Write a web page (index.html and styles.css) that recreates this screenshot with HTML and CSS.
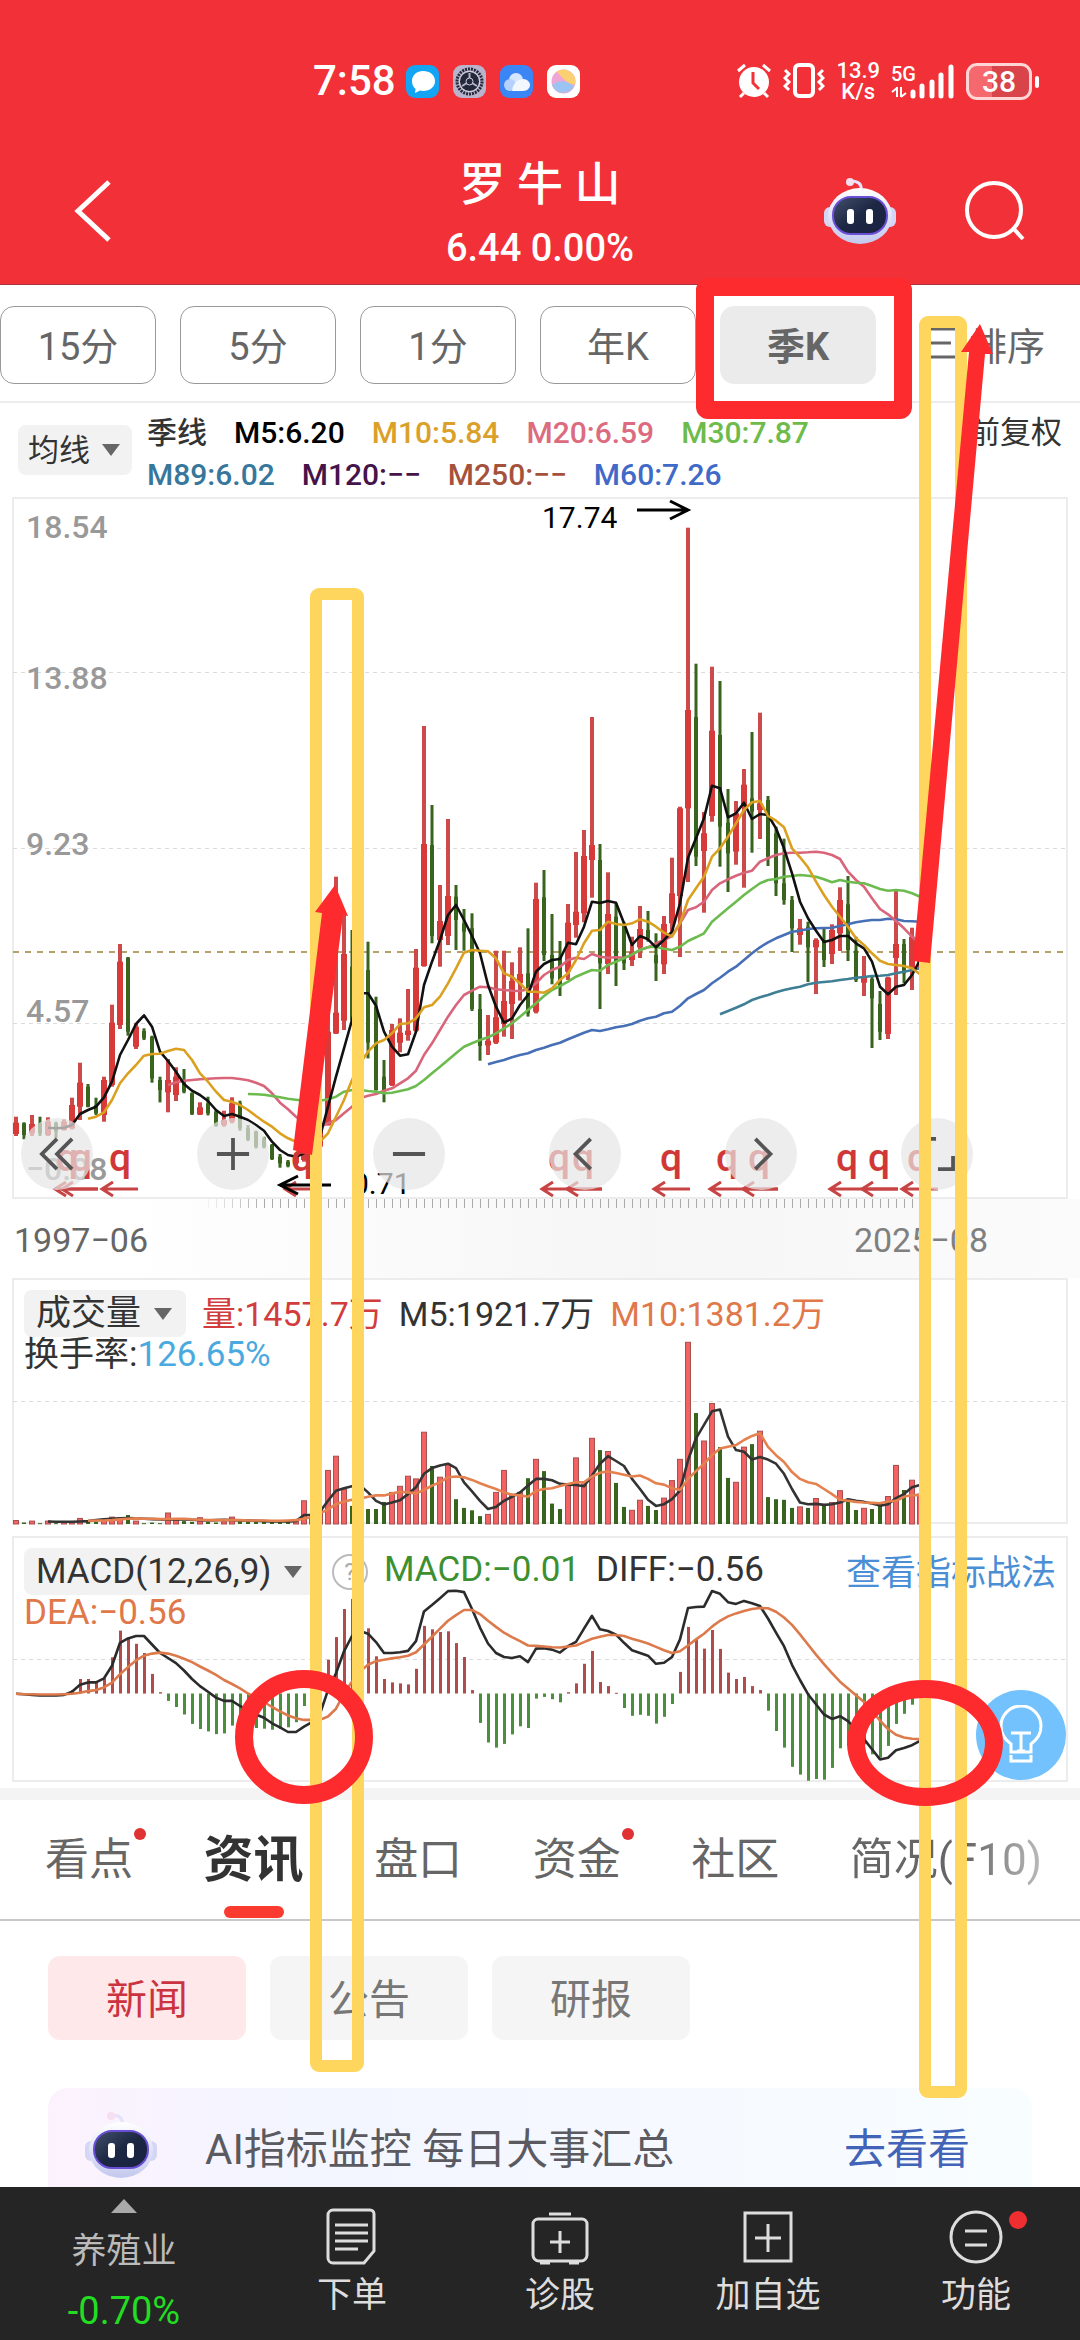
FILE: index.html
```
<!DOCTYPE html>
<html lang="zh-CN">
<head>
  <meta charset="UTF-8">
  <title>罗牛山 - 季K</title>
  <meta name="viewport" content="width=device-width, initial-scale=1.0">
  <link rel="stylesheet" href="styles.css">
</head>
<body>
  <!-- shared robot head -->
  <svg class="sprite" aria-hidden="true">
    <defs>
      <linearGradient id="shell" x1="0" y1="0" x2="0" y2="1">
        <stop offset="0" stop-color="#ffffff"/>
        <stop offset="1" stop-color="#c3c8ee"/>
      </linearGradient>
      <linearGradient id="visor" x1="0" y1="0" x2="1" y2="1">
        <stop offset="0" stop-color="#45506c"/>
        <stop offset="0.5" stop-color="#1c2744"/>
        <stop offset="1" stop-color="#1a2240"/>
      </linearGradient>
      <symbol id="robot" viewBox="0 0 72 68">
        <path d="M37 13C38 7 34 4 27 4" fill="none" stroke="#e6e2fb" stroke-width="3"/>
        <circle cx="26" cy="5" r="4" fill="#f6dff0"/>
        <rect x="0" y="30" width="12" height="20" rx="6" fill="#d5d5f5"/>
        <rect x="60" y="30" width="12" height="20" rx="6" fill="#d5d5f5"/>
        <ellipse cx="36" cy="39" rx="32" ry="28" fill="url(#shell)"/>
        <rect x="9" y="20" width="54" height="37" rx="18" fill="url(#visor)" stroke="#6a4fd6" stroke-width="2"/>
        <rect x="23" y="32" width="7" height="15" rx="3" fill="#fff"/>
        <rect x="42" y="32" width="7" height="15" rx="3" fill="#fff"/>
      </symbol>
    </defs>
  </svg>

  <div class="app">
    <header class="header">
      <div class="status">
        <div class="status-left">
          <span class="clock">7:58</span>
          <svg class="app-icon" viewBox="0 0 33 33">
            <rect width="33" height="33" rx="9" fill="#13a5f3"/>
            <path d="M17 6c7 0 12 4 12 10s-5 10-12 10c-1 0-2 0-3-.4L9 28l.6-4C7 22 6 19 6 16 6 10 11 6 17 6z" fill="#fff"/>
          </svg>
          <svg class="app-icon" viewBox="0 0 33 33">
            <rect width="33" height="33" rx="9" fill="#b9b3cc"/>
            <circle cx="16.500" cy="16.500" r="12.500" fill="none" stroke="#23293a" stroke-width="3" stroke-dasharray="2 1"/>
            <circle cx="16.500" cy="16.500" r="10" fill="#23293a" stroke="#e6e6ee"/>
            <path d="M16.500 16.500V8M16.500 16.500L9 21M16.500 16.500L24 21" stroke="#b9b3cc" stroke-width="2"/>
            <circle cx="16.500" cy="16.500" r="3.500" fill="#23293a" stroke="#cfcfe0"/>
          </svg>
          <svg class="app-icon" viewBox="0 0 33 33">
            <rect width="33" height="33" rx="9" fill="#3b86f6"/>
            <circle cx="16" cy="15" r="7" fill="#d5e6ff"/>
            <circle cx="10" cy="20" r="6" fill="#b5d2ff"/>
            <path d="M12 26c1-8 6-12 11-12 4 0 7 3 7 6s-3 6-7 6z" fill="#f3f8ff"/>
          </svg>
          <svg class="app-icon" viewBox="0 0 33 33">
            <rect width="33" height="33" rx="9" fill="#fff"/>
            <circle cx="16.500" cy="16.500" r="12" fill="#f0a6d4"/>
            <path d="M10 6.500a12 12 0 0 1 18 13C22 20 16 14 10 6.500z" fill="#fbd070"/>
            <path d="M5 20c8-6 14-4 22 1a12 12 0 0 1-22-1z" fill="#9cc4f2"/>
          </svg>
        </div>
        <div class="status-right">
          <svg class="alarm" viewBox="0 0 36 36">
            <circle cx="18" cy="19" r="15" fill="#fff"/>
            <path d="M2 8l7-6M34 8l-7-6M8 30l-4 4M28 30l4 4" stroke="#fff" stroke-width="3" fill="none"/>
            <path d="M17 9v11l6 6" stroke="#f23037" stroke-width="3" fill="none"/>
          </svg>
          <svg class="vibrate" viewBox="0 0 42 36">
            <rect x="12" y="2" width="18" height="31" rx="4" fill="none" stroke="#fff" stroke-width="4"/>
            <path d="M2 7l4 4-4 4 4 4-4 4 4 4M40 7l-4 4 4 4-4 4 4 4-4 4" fill="none" stroke="#fff" stroke-width="3"/>
          </svg>
          <span class="speed">13.9<br>K/s</span>
          <svg class="signal" viewBox="0 0 64 36">
            <path d="M22 33v-4M31 33V23M41 33V19M50 33V12M60 33V4" stroke="#fff" stroke-width="5" stroke-linecap="round"/>
            <path d="M6 24v10M6 25l-5 4M10 24v10M10 34l5-4" stroke="#fff" stroke-width="2"/>
            <text x="0" y="18" class="net">5G</text>
          </svg>
          <span class="battery">38</span>
        </div>
      </div>
      <div class="title-row">
        <button class="icon-btn back" aria-label="返回">
          <svg width="40" height="64" viewBox="0 0 40 64"><path d="M37 3L6 32l31 29" fill="none" stroke="#fff" stroke-width="5"/></svg>
        </button>
        <div class="title">
          <h1>罗 牛 山</h1>
          <p>6.44 0.00%</p>
        </div>
        <div class="title-actions">
          <button class="icon-btn" aria-label="助手"><svg width="72" height="68"><use href="#robot"/></svg></button>
          <button class="icon-btn" aria-label="搜索">
            <svg width="62" height="62" viewBox="0 0 62 62"><circle cx="30" cy="30" r="27" fill="none" stroke="#fff" stroke-width="4"/><path d="M49 48l10 11" stroke="#fff" stroke-width="4"/></svg>
          </button>
        </div>
      </div>
    </header>

    <main class="content">
      <nav class="periods">
        <button>15分</button>
        <button>5分</button>
        <button>1分</button>
        <button>年K</button>
        <button class="active">季K</button>
        <button class="sort">
          <svg width="24" height="32" viewBox="0 0 24 32"><path d="M0 2h24M0 16h20M0 30h24" stroke="#666" stroke-width="3"/></svg>
          排序
        </button>
      </nav>

      <section class="legend">
        <label class="picker picker-ma"><select aria-label="均线"><option>均线</option></select></label>
        <div class="ma-lines">
          <div class="ma-row">
            <span class="c-dark">季线</span>
            <span class="c-black">M5:6.20</span>
            <span class="c-gold">M10:5.84</span>
            <span class="c-pink">M20:6.59</span>
            <span class="c-lime">M30:7.87</span>
          </div>
          <div class="ma-row">
            <span class="c-teal">M89:6.02</span>
            <span class="c-purple">M120:−−</span>
            <span class="c-brown">M250:−−</span>
            <span class="c-blue">M60:7.26</span>
          </div>
        </div>
        <button class="adjust">前复权</button>
      </section>

      <section class="chart chart-price">
        <svg id="price" viewBox="0 498 1080 701"></svg>
        <div class="chart-tools">
          <button aria-label="后退"><svg viewBox="0 0 36 36"><path d="M18 2L2 18l16 16M34 2L18 18l16 16"/></svg></button>
          <button aria-label="放大"><svg viewBox="0 0 36 36"><path d="M18 1v34M1 18h34"/></svg></button>
          <button aria-label="缩小"><svg viewBox="0 0 36 36"><path d="M1 18h34"/></svg></button>
          <button aria-label="左移"><svg viewBox="0 0 36 36"><path d="M24 2L8 18l16 16"/></svg></button>
          <button aria-label="右移"><svg viewBox="0 0 36 36"><path d="M12 2l16 16-16 16"/></svg></button>
          <button aria-label="全屏"><svg viewBox="0 0 36 36"><path d="M1 16V2h16M35 20v14H19"/></svg></button>
        </div>
      </section>

      <div class="dates">
        <span>1997−06</span>
        <span class="date-end">2025−08</span>
      </div>

      <section class="chart chart-volume">
        <svg id="volume" viewBox="0 1277 1080 247"></svg>
        <div class="chart-info">
          <div class="info-row">
            <label class="picker"><select aria-label="副图一"><option>成交量</option></select></label>
            <span class="c-red">量:1457.7万</span>
            <span class="c-dark">M5:1921.7万</span>
            <span class="c-orange">M10:1381.2万</span>
          </div>
          <div class="info-sub"><span class="c-dark">换手率:</span><span class="c-sky">126.65%</span></div>
        </div>
      </section>

      <section class="chart chart-macd">
        <svg id="macd" viewBox="0 1535 1080 246"></svg>
        <div class="chart-info">
          <div class="info-row">
            <label class="picker"><select aria-label="副图二"><option>MACD(12,26,9)</option></select></label>
            <button class="help" aria-label="说明">?</button>
            <span class="c-green">MACD:−0.01</span>
            <span class="c-dark">DIFF:−0.56</span>
            <a class="tips" href="#">查看指标战法</a>
          </div>
          <div class="info-sub"><span class="c-orange">DEA:−0.56</span></div>
        </div>
        <button class="bulb" aria-label="提示">
          <svg width="44" height="60" viewBox="0 0 44 60"><path d="M12 47v-8C5 34 2 28 2 21a20 20 0 0 1 40 0c0 7-3 13-10 18v8zM12 50v6h20v-6M12 28h20M22 28v18M18 46h8" fill="none" stroke="#fff" stroke-width="3"/></svg>
        </button>
      </section>

      <nav class="tabs">
        <a href="#" class="dot">看点</a>
        <a href="#" class="active">资讯</a>
        <a href="#">盘口</a>
        <a href="#" class="dot">资金</a>
        <a href="#">社区</a>
        <a href="#" class="fade">简况(F10)</a>
      </nav>

      <div class="chips">
        <button class="active">新闻</button>
        <button>公告</button>
        <button>研报</button>
      </div>

      <div class="banner">
        <svg width="72" height="68"><use href="#robot"/></svg>
        <span>AI指标监控 每日大事汇总</span>
        <a href="#">去看看</a>
      </div>
    </main>

    <nav class="bottom-nav">
      <a href="#" class="sector">
        <svg width="26" height="14" viewBox="0 0 26 14"><path d="M13 0l13 14H0z" fill="#aaa"/></svg>
        <span>养殖业</span>
        <b>-0.70%</b>
      </a>
      <a href="#">
        <svg viewBox="0 0 60 60"><path d="M11 3h37a4 4 0 0 1 4 4v37l-10 12H11a5 5 0 0 1-5-5V8a5 5 0 0 1 5-5zM13 18h33M13 26h33M13 34h33M13 42h23"/></svg>
        <span>下单</span>
      </a>
      <a href="#">
        <svg viewBox="0 0 60 60"><path d="M8 12h44a5 5 0 0 1 5 5v31a6 6 0 0 1-6 6H9a6 6 0 0 1-6-6V17a5 5 0 0 1 5-5zM19 7h22M30 24v22M20 35h20M10 56h10M39 56h10"/></svg>
        <span>诊股</span>
      </a>
      <a href="#">
        <svg viewBox="0 0 60 60"><path d="M7 6h46v48H7zM30 17v28M17 31h26"/></svg>
        <span>加自选</span>
      </a>
      <a href="#" class="more">
        <svg viewBox="0 0 60 60"><path d="M30 5a25 25 0 1 1 0 50a25 25 0 1 1 0-50zM19 24h22M19 38h22"/></svg>
        <span>功能</span>
      </a>
    </nav>

    <!-- hand-drawn marks on top of everything -->
    <svg class="marks" viewBox="0 0 1080 2340" aria-hidden="true">
      <rect x="316" y="594" width="42" height="1472" rx="3" class="mark-yellow"/>
      <rect x="925" y="322" width="36" height="1770" rx="3" class="mark-yellow"/>
      <rect x="705" y="287" width="198" height="123" rx="3" class="mark-red"/>
      <ellipse cx="304" cy="1737" rx="60" ry="58" class="mark-red"/>
      <ellipse cx="925" cy="1743" rx="69" ry="54" class="mark-red"/>
      <path d="M335 885l13 31-5-1-31 240-19-5 29-237-7-1z" class="mark-fill"/>
      <path d="M980 324l13 30-8 0-55 609-17-2 56-609-8 0z" class="mark-fill"/>
    </svg>
  </div>

  <script src="script.js"></script>
</body>
</html>
```

FILE: styles.css
```
:root {
  --red: #f23037;
  --line: #ececec;
  --text: #333;
  --muted: #666;
}

* {
  box-sizing: border-box;
}

body {
  margin: 0;
  background: #fff;
  color: var(--text);
  font-family: Roboto, "Noto Sans CJK SC", sans-serif;
}

h1, p {
  margin: 0;
  font-weight: 400;
}

button, select {
  margin: 0;
  padding: 0;
  border: none;
  background: none;
  color: inherit;
  font: inherit;
  cursor: pointer;
}

a {
  color: inherit;
  text-decoration: none;
}

span, a, button {
  white-space: nowrap;
}

svg {
  display: block;
}

.sprite {
  position: absolute;
  width: 0;
  height: 0;
}

.app {
  position: relative;
  display: flex;
  flex-direction: column;
  height: 100vh;
  overflow: hidden;
}

/* header */
.header {
  flex: none;
  background: var(--red);
  color: #fff;
  border-bottom: 1px solid #a8383c;
}

.status {
  display: flex;
  justify-content: space-between;
  align-items: center;
  height: 162px;
  padding: 0 48px 0 313px;
}

.status-left,
.status-right {
  display: flex;
  align-items: center;
}

.status-left {
  gap: 14px;
}

.status-right {
  gap: 11px;
}

.clock {
  font-size: 42px;
  font-weight: 500;
  line-height: 48px;
  margin-right: -4px;
}

.app-icon {
  width: 33px;
  height: 33px;
}

.alarm {
  width: 36px;
  height: 36px;
}

.vibrate {
  width: 42px;
  height: 36px;
}

.speed {
  font-size: 22px;
  font-weight: 500;
  line-height: 21px;
  text-align: center;
}

.signal {
  width: 64px;
  height: 36px;
}

.net {
  font-size: 20px;
  font-weight: 500;
  fill: #fff;
}

.battery {
  position: relative;
  width: 66px;
  border: 3px solid #ffd5d6;
  border-radius: 11px;
  background: linear-gradient(90deg, #f5696e 38%, #d9444a 38%);
  font-size: 30px;
  font-weight: 500;
  line-height: 31px;
  text-align: center;
}

.battery::after {
  content: "";
  position: absolute;
  right: -10px;
  top: 10px;
  width: 4px;
  height: 12px;
  border-radius: 2px;
  background: #fff;
}

.title-row {
  display: grid;
  grid-template-columns: 1fr auto 1fr;
  grid-template-rows: 108px;
  align-items: center;
  height: 122px;
  padding: 0 54px 14px 72px;
}

.title {
  margin-left: -18px;
  text-align: center;
}

.title h1 {
  font-size: 46px;
  font-weight: 500;
  line-height: 64px;
}

.title p {
  font-size: 38px;
  font-weight: 500;
  line-height: 64px;
}

.title-actions {
  display: flex;
  justify-content: flex-end;
  align-items: center;
  gap: 68px;
}

.icon-btn {
  justify-self: start;
  margin-bottom: 10px;
}

/* period buttons */
.content {
  flex: 1;
  min-height: 0;
  overflow: hidden;
}

.periods {
  display: flex;
  gap: 24px;
  height: 118px;
  padding-top: 21px;
  border-bottom: 2px solid var(--line);
}

.periods button {
  width: 156px;
  height: 78px;
  padding-bottom: 4px;
  border: 1px solid #999;
  border-radius: 14px;
  color: var(--muted);
  font-size: 38px;
}

.periods .active {
  border-color: #ebebeb;
  background: #ebebeb;
  font-weight: 700;
}

.periods .sort {
  display: flex;
  align-items: center;
  justify-content: center;
  gap: 14px;
  width: 176px;
  border: none;
}

/* moving average legend */
.legend {
  display: flex;
  align-items: flex-start;
  height: 95px;
  padding: 9px 18px 0;
  font-size: 31px;
}

.picker {
  position: relative;
  border-radius: 8px;
  background: #f2f2f2;
}

.picker::after {
  content: "";
  position: absolute;
  right: 14px;
  top: 50%;
  margin-top: -6px;
  border: 9px solid transparent;
  border-top: 12px solid var(--muted);
  border-bottom: none;
  pointer-events: none;
}

.picker select {
  display: block;
  appearance: none;
  height: 47px;
  padding: 0 44px 0 12px;
}

.picker-ma {
  margin-top: 13px;
}

.picker-ma select {
  height: 50px;
  padding: 0 42px 0 10px;
}

.picker-ma::after {
  right: 12px;
}

.ma-lines {
  flex: 1;
  margin-left: 15px;
  font-size: 30px;
  font-weight: 500;
}

.ma-row {
  display: flex;
  gap: 27px;
  line-height: 42px;
}

.adjust {
  line-height: 42px;
}

.c-dark { color: #333; }
.c-black { color: #000; }
.c-gold { color: #dba02a; }
.c-pink { color: #dc6b80; }
.c-lime { color: #6dbb4a; }
.c-teal { color: #37779c; }
.c-purple { color: #45144a; }
.c-brown { color: #a5523c; }
.c-blue { color: #4169c8; }
.c-red { color: #d23c3c; }
.c-orange { color: #e0784a; }
.c-sky { color: #4aa9de; }
.c-green { color: #3d9030; }

/* charts */
.chart {
  position: relative;
}

.chart > svg {
  width: 100%;
  overflow: visible;
}

.chart-price {
  z-index: 1;
}

.frame { fill: none; stroke: var(--line); stroke-width: 2; }
.grid { stroke: #dcdcdc; stroke-width: 1; stroke-dasharray: 4 4; }
.now { stroke: #b5a06a; stroke-width: 2; stroke-dasharray: 6 6; }
.up { fill: #d83a3a; }
.down { fill: #38641e; }
.up-wick { fill: #cc4a4a; }
.vol-up { fill: #f26262; stroke: #a85050; }
.hist-up { fill: #b04c4c; }
.hist-down { fill: #4b8f3c; }
.line { fill: none; stroke-width: 2.6; stroke-linejoin: round; }
.tick { stroke: #aaa; stroke-width: 1; }
.axis { fill: #999; font-size: 32px; font-weight: 500; }
.peak { fill: #000; font-size: 30px; }
.peak-arrow { fill: none; stroke: #000; stroke-width: 3; }
.event { fill: #d03838; font-size: 39px; font-weight: 500; text-anchor: middle; }
.event-arrow { fill: none; stroke: #c84444; stroke-width: 3; }

.chart-tools {
  position: absolute;
  left: 0;
  right: 0;
  bottom: 9px;
  display: flex;
  justify-content: space-between;
  padding: 0 107px 0 21px;
}

.chart-tools button {
  display: flex;
  align-items: center;
  justify-content: center;
  width: 72px;
  height: 72px;
  border-radius: 50%;
  background: rgba(229, 229, 229, 0.7);
}

.chart-tools svg {
  width: 34px;
  height: 34px;
  overflow: visible;
  fill: none;
  stroke: #555;
  stroke-width: 4;
}

.dates {
  display: flex;
  justify-content: space-between;
  height: 79px;
  padding: 0 92px 0 14px;
  background: linear-gradient(90deg, #fff 10%, #f6f6f6 60%, #fbfbfb);
  color: var(--muted);
  font-size: 34px;
  line-height: 82px;
}

.date-end {
  color: #808080;
}

.chart-info {
  position: absolute;
  left: 24px;
  right: 24px;
  top: 12px;
  font-size: 35px;
}

.info-row {
  display: flex;
  align-items: center;
  gap: 16px;
  height: 47px;
}

.info-row > span,
.info-row > a {
  padding-bottom: 4px;
}

.chart-volume .info-row > span {
  font-size: 34px;
}

.info-sub {
  line-height: 36px;
}

.chart-macd {
  margin-top: 11px;
}

.help {
  width: 36px;
  height: 36px;
  border: 2px solid #bbb;
  border-radius: 50%;
  color: #aaa;
  font-size: 24px;
  line-height: 30px;
}

.tips {
  margin-left: auto;
  color: #4a8fd6;
}

.bulb {
  position: absolute;
  right: 14px;
  bottom: 2px;
  display: flex;
  align-items: center;
  justify-content: center;
  width: 90px;
  height: 90px;
  border-radius: 50%;
  background: #74c2fd;
}

/* info tabs */
.tabs {
  display: flex;
  justify-content: space-between;
  align-items: center;
  height: 133px;
  margin-top: 6px;
  padding: 0 38px 0 45px;
  border-top: 12px solid #f4f4f4;
  border-bottom: 2px solid #c8c8c8;
  color: var(--muted);
  font-size: 44px;
  line-height: 64px;
}

.tabs a {
  position: relative;
}

.tabs .active {
  color: var(--text);
  font-size: 50px;
  font-weight: 700;
}

.tabs .active::after {
  content: "";
  position: absolute;
  left: 50%;
  bottom: -26px;
  width: 60px;
  height: 12px;
  margin-left: -30px;
  border-radius: 6px;
  background: #fb3a30;
}

.tabs .dot::after {
  content: "";
  position: absolute;
  right: -13px;
  top: 0;
  width: 12px;
  height: 12px;
  border-radius: 50%;
  background: #e03232;
}

.tabs .fade {
  background: linear-gradient(90deg, #666 60%, #bbb);
  background-clip: text;
  color: transparent;
}

.chips {
  display: flex;
  gap: 24px;
  padding: 35px 48px 0;
}

.chips button {
  width: 198px;
  height: 84px;
  padding-bottom: 4px;
  border-radius: 12px;
  background: #f5f5f5;
  color: #777;
  font-size: 41px;
}

.chips .active {
  background: #ffe8ea;
  color: #cc3340;
}

.banner {
  display: flex;
  align-items: center;
  height: 140px;
  margin: 48px 48px 0;
  padding: 0 62px 26px 37px;
  border-radius: 20px;
  background: linear-gradient(90deg, #fcf2fd, #f3f5ff 25%, #f8fdff);
  color: #5a5a60;
  font-size: 42px;
}

.banner span {
  margin-left: 48px;
}

.banner a {
  margin-left: auto;
  color: #4163b8;
}

/* bottom bar */
.bottom-nav {
  flex: none;
  display: grid;
  grid-template-columns: 31fr 26fr 26fr 26fr 26fr;
  height: 153px;
  background: #252525;
  color: #ddd;
  font-size: 35px;
}

.bottom-nav a {
  display: flex;
  flex-direction: column;
  align-items: center;
  padding-top: 20px;
}

.bottom-nav a:not(.sector) svg {
  width: 60px;
  height: 60px;
  fill: none;
  stroke: #ddd;
  stroke-width: 3;
}

.bottom-nav span {
  line-height: 58px;
}

.bottom-nav .sector {
  padding-top: 12px;
}

.sector span {
  margin-top: 10px;
  color: #bbb;
}

.sector b {
  color: #22dd22;
  font-size: 38px;
  font-weight: 400;
  line-height: 60px;
}

.more {
  position: relative;
}

.more::after {
  content: "";
  position: absolute;
  right: 53px;
  top: 24px;
  width: 18px;
  height: 18px;
  border-radius: 50%;
  background: #ee2e30;
}

/* marks */
.marks {
  position: absolute;
  left: 0;
  top: 0;
  z-index: 5;
  width: 100%;
  pointer-events: none;
}

.mark-yellow { fill: none; stroke: #fed65d; stroke-width: 12; }
.mark-red { fill: none; stroke: #fd2b2d; stroke-width: 18; }
.mark-fill { fill: #fd2b2d; }
```

FILE: script.js
```
// Values are offsets from the pane origin, in sub-pixel units.
// One candle per quarter, 8px apart.
const STEP = 8;
const LEFT = 16;
const PRICE = { origin: 860, unit: 3 };
const LOWER = { origin: 1270, unit: 2.9585 };
const xOf = i => LEFT + i * STEP;
const yOf = (pane, v) => pane.origin + v / pane.unit;

// r = up, g = down; high, body top, body bottom, low
const candles = `
r 770 788 822 828|g 787 790 825 838|r 765 792 820 828|g 770 790 820 828|r 772 785 825 828|g 785 790 815 835
r 778 785 810 812|r 713 735 805 808|r 608 668 740 780|g 672 680 740 742|g 713 735 760 765|r 650 660 765 785
r 434 488 675 680|r 252 305 495 507|g 291 293 515 527|r 490 500 560 567|g 505 513 535 540|g 527 530 655 668
g 650 660 690 727|r 597 660 697 757|r 622 650 705 723|g 627 660 695 700|g 697 700 762 765|r 727 742 764 765
g 710 730 760 766|g 750 755 797 800|r 752 780 795 800|r 712 730 785 790|g 722 730 805 812|g 795 805 838 843
g 812 815 860 865|g 830 835 860 865|g 852 855 897 900|g 882 890 910 923|g 900 905 917 922|r 880 890 910 917
r 860 870 900 905|r 840 850 895 900|r 780 790 860 870|r 460 515 795 797|r 50 458 520 522|r 165 282 482 510
g 210 320 480 485|g 260 330 480 500|g 245 330 548 595|g 410 440 690 692|g 600 650 690 727|r 492 510 675 678
r 475 518 548 577|r 387 512 525 542|r 267 323 512 515|r -402 -48 318 320|g -165 -45 228 250|r 75 183 240 320
r -123 108 228 255|g 75 110 180 270|g 147 190 215 272|g 160 205 447 453|g 402 447 558 602|r 465 542 556 585
r 272 472 548 552|r 272 423 492 530|r 307 363 432 537|r 262 342 370 422|g 205 340 460 470|r 68 117 455 460
g 30 112 285 303|g 162 285 355 373|g 243 290 380 408|r 132 188 335 360|r -24 155 195 233|r -90 -12 160 187
r -429 -45 0 113|g -48 0 310 447|r 37 162 312 342|g 130 170 305 378|g 185 195 310 330|r 230 275 300 318
r 138 207 262 294|g 153 210 235 245|g 220 285 310 363|r 168 192 313 342|r -7 100 190 215|r -160 -155 108 291
r -997 -450 -155 66|g -589 -429 -10 18|r -144 -80 -27 158|r -580 -388 -132 -115|g -537 -375 -100 20|g -213 -112 -20 96
r -177 -140 -25 14|r -273 -226 -160 83|g -384 -185 -145 -22|r -442 -170 -150 -63|g -192 -180 -10 18|g -100 -80 70 108
g -64 70 120 134|g 108 120 205 276|r 177 205 225 254|g 185 200 262 366|r 235 240 262 402|g 205 240 300 321
r 193 210 282 312|r 82 120 220 273|g 48 133 270 303|g 230 272 360 366|r 288 350 368 408|g 350 357 415 564
g 393 432 515 540|r 350 353 522 537|r 93 252 294 405|g 237 252 340 370|r 203 230 325 390|r 250 290 320 330
`.trim().split(/[|\n]/).map(row => {
  const [kind, ...v] = row.split(' ');
  return { up: kind === 'r', v: v.map(Number) };
});

const averages = [
  { color: '#466fb5', from: 59, v: [613,606,600,592,585,580,570,563,555,548,538,528,518,510,513,508,502,498,492,482,475,470,460,455,437,415,402,390,370,353,335,320,300,280,262,247,235,225,215,212,207,205,204,203,198,193,187,183,180,180,176,178,183,184,185] },
  { color: '#3f7f96', from: 88, v: [463,453,443,433,420,412,405,397,390,385,380,373,368,366,364,360,357,353,351,348,347,345,340,335,330,325] },
  { color: '#d9657b', from: 19, v: [675,667,662,660,658,656,655,654,654,657,661,668,678,700,728,748,770,790,800,800,790,780,760,740,715,707,702,692,685,670,655,632,585,550,510,470,435,405,392,380,382,388,390,392,393,388,370,345,330,320,300,293,297,282,290,293,292,293,285,270,262,250,240,228,190,150,142,125,90,70,58,47,38,32,5,-5,-15,-20,-22,-22,-23,-25,-22,-15,-3,35,60,80,115,147,163,183,205,230,250] },
  { color: '#6cbb4f', from: 29, v: [702,703,704,708,712,716,719,722,724,722,718,710,695,690,690,693,695,700,698,693,688,678,660,640,620,600,580,560,550,540,532,520,505,490,470,450,430,408,390,378,365,350,340,330,332,315,305,295,283,270,262,260,266,270,260,243,232,220,185,165,145,125,105,87,70,60,57,50,48,45,47,50,58,67,60,65,68,70,78,87,92,90,92,100,110] },
  { color: '#111', from: 4, v: [803,805,803,795,762,750,740,712,665,585,540,492,466,500,575,603,635,672,692,705,723,750,768,762,770,780,795,812,845,870,885,890,880,860,830,740,650,565,480,400,400,437,515,560,587,583,515,375,305,240,165,135,180,228,280,375,440,488,475,435,405,335,312,300,297,248,253,200,125,129,123,128,190,255,228,238,262,240,215,130,-7,-65,-125,-223,-215,-128,-140,-172,-123,-138,-135,-95,-35,40,125,175,212,246,240,228,228,250,265,305,380,403,380,375,345,300] },
  { color: '#dba020', from: 9, v: [776,770,757,720,670,640,615,587,582,581,573,566,570,600,640,665,695,720,725,735,750,768,785,800,820,835,845,850,852,845,820,770,720,660,610,575,550,540,520,492,490,475,442,435,410,370,325,278,270,272,274,295,340,350,370,395,395,398,385,360,340,300,250,212,210,185,192,195,190,178,185,200,218,230,190,120,85,50,-10,-35,-70,-110,-150,-173,-177,-132,-118,-98,-35,-8,22,65,105,140,170,200,235,255,280,302,312,315,318,325,343] }
];

const volumes = [738,744,740,746,740,746,744,742,732,740,742,735,728,732,722,740,746,744,746,716,735,740,742,730,742,744,742,728,738,740,742,742,742,743,740,735,680,720,700,590,548,645,695,700,704,704,683,655,637,607,615,477,577,610,572,675,701,708,725,720,655,590,660,655,613,557,592,688,704,635,553,630,495,530,534,627,698,708,678,695,707,672,620,557,211,420,503,392,521,612,625,521,512,474,669,675,677,701,698,701,673,690,685,650,680,707,702,704,690,667,575,648,619,660];
const volumeAverages = [
  { color: '#333', from: 4, v: [741,742,742,742,741,740,737,735,733,732,731,732,733,734,735,736,735,735,736,737,738,737,736,737,738,738,739,740,741,741,741,740,722,722,712,680,650,643,637,634,655,680,691,685,678,660,640,600,583,575,570,583,625,652,680,704,698,680,668,655,635,615,615,619,630,632,633,637,605,570,548,562,577,615,645,677,695,690,675,650,560,495,455,415,410,490,530,535,558,550,558,570,600,645,685,690,689,692,690,685,675,680,683,688,694,690,672,660,640,633] },
  { color: '#e5804f', from: 9, v: [739,738,738,737,735,733,732,733,733,734,734,733,733,735,736,737,737,737,737,737,738,738,738,739,739,738,737,733,727,717,705,690,682,677,674,668,664,664,658,653,655,658,648,635,625,610,608,610,618,628,637,645,655,662,664,668,650,645,643,636,630,625,625,608,597,593,598,603,608,605,615,628,632,643,648,615,592,570,545,525,520,515,500,488,480,520,545,565,595,615,625,630,645,660,677,680,683,685,686,687,682,680,668,663,663] }
];

const histogram = [1250,1250,1250,1250,1250,1250,1250,1240,1207,1207,1217,1205,1143,1064,1085,1103,1130,1192,1246,1272,1290,1312,1340,1355,1362,1370,1368,1345,1345,1352,1352,1354,1357,1355,1350,1335,1287,1255,1230,1150,1083,1000,970,1000,1057,1140,1207,1217,1220,1223,1177,1050,1060,1068,1066,1101,1142,1240,1337,1395,1410,1399,1371,1347,1352,1265,1260,1267,1276,1246,1220,1162,1124,1216,1228,1248,1293,1316,1313,1316,1339,1319,1281,1186,1053,1088,1117,1062,1118,1188,1207,1201,1228,1240,1301,1361,1410,1467,1490,1508,1503,1505,1470,1412,1405,1390,1400,1430,1440,1405,1340,1310,1283,1262];
const macdLines = [
  { color: '#2b2b2b', from: 0, v: [1251,1252,1254,1256,1256,1256,1254,1245,1224,1217,1217,1205,1168,1100,1087,1080,1080,1105,1130,1145,1160,1182,1207,1228,1245,1262,1272,1272,1287,1300,1312,1322,1338,1350,1364,1364,1348,1335,1310,1240,1190,1125,1080,1065,1073,1098,1130,1130,1128,1124,1095,1007,988,968,947,946,950,1000,1055,1102,1130,1142,1145,1140,1157,1117,1116,1120,1129,1110,1097,1058,1020,1060,1065,1076,1100,1122,1130,1138,1162,1159,1142,1090,997,994,993,947,955,980,985,976,983,991,1028,1070,1110,1165,1210,1252,1282,1312,1325,1317,1332,1355,1385,1415,1445,1440,1418,1411,1403,1390] },
  { color: '#dc7a4c', from: 0, v: [1251,1252,1252,1253,1253,1253,1252,1251,1248,1243,1240,1232,1218,1193,1172,1152,1138,1132,1129,1132,1138,1147,1157,1170,1182,1195,1210,1222,1235,1250,1262,1275,1290,1303,1315,1323,1328,1328,1328,1318,1295,1250,1215,1185,1165,1154,1150,1146,1143,1138,1128,1105,1082,1058,1035,1018,1003,1003,1015,1035,1053,1070,1083,1095,1108,1109,1111,1113,1114,1111,1108,1098,1088,1082,1077,1077,1080,1088,1095,1102,1112,1122,1130,1125,1108,1090,1073,1052,1035,1022,1013,1006,1000,997,998,1008,1025,1047,1075,1105,1135,1163,1190,1215,1235,1255,1275,1300,1330,1355,1372,1380,1384,1385] }
];

function rect(cls, x, y, w, h) {
  return `<rect class="${cls}" x="${x}" y="${y.toFixed(1)}" width="${w}" height="${Math.max(h, 1).toFixed(1)}"/>`;
}

function hline(cls, y) {
  return `<line class="${cls}" x1="13" x2="1067" y1="${y}" y2="${y}"/>`;
}

function polyline(pane, s) {
  const pts = s.v.map((v, k) => xOf(s.from + k) + ',' + yOf(pane, v).toFixed(1)).join(' ');
  return `<polyline class="line" stroke="${s.color}" points="${pts}"/>`;
}

function arrowLeft(cls, tip, tail, y) {
  return `<path class="${cls}" d="M${tail} ${y}H${tip}M${tip + 11} ${y - 7}L${tip} ${y}L${tip + 11} ${y + 7}"/>`;
}

function drawPrice() {
  let out = '<rect class="frame" x="13" y="498" width="1054" height="700"/>';
  out += [672, 848, 1023].map(y => hline('grid', y + 0.5)).join('') + hline('now', 952);
  [['18.54', 538], ['13.88', 689], ['9.23', 855], ['4.57', 1022], ['−0.08', 1180]].forEach(([t, y]) => {
    out += `<text class="axis" x="26" y="${y}">${t}</text>`;
  });
  candles.forEach((c, i) => {
    const [hi, top, bot, lo] = c.v.map(v => yOf(PRICE, v));
    const x = xOf(i);
    out += rect(c.up ? 'up-wick' : 'down', c.up ? x - 2 : x - 1.5, hi, c.up ? 4 : 3, lo - hi);
    out += rect(c.up ? 'up' : 'down', c.up ? x - 3 : x - 2, top, c.up ? 6 : 4, bot - top);
  });
  averages.forEach(s => { out += polyline(PRICE, s); });
  [67, 81, 120, 302, 559, 583, 671, 727, 759, 847, 879, 918].forEach(x => {
    out += `<text class="event" x="${x}" y="1171">q</text>`;
  });
  [[55, 98], [62, 98], [102, 138], [285, 311], [542, 602], [567, 602], [654, 690], [710, 778], [743, 778], [830, 898], [862, 898], [902, 938]].forEach(([a, b]) => {
    out += arrowLeft('event-arrow', a, b, 1189);
  });
  out += '<text class="peak" x="542" y="528">17.74</text>';
  out += '<path class="peak-arrow" d="M637 510h50M670 501l18 9-18 9"/>';
  out += '<text class="peak" x="352" y="1194">0.71</text>';
  out += '<path class="peak-arrow" d="M331 1185h-50M298 1176l-18 9 18 9"/>';
  for (let i = 24; i <= 113; i++) {
    out += `<line class="tick" opacity="${Math.min(1, (i - 23) / 8)}" x1="${xOf(i) + 0.5}" x2="${xOf(i) + 0.5}" y1="1199" y2="1208"/>`;
  }
  document.getElementById('price').innerHTML = out;
}

function drawVolume() {
  let out = '<rect class="frame" x="13" y="1278" width="1054" height="244"/>' + hline('grid', 1400.5);
  volumes.forEach((v, i) => {
    const y = yOf(LOWER, v);
    const up = candles[i].up;
    out += rect(up ? 'vol-up' : 'down', xOf(i) - (up ? 2.5 : 2), y, up ? 5 : 4, 1523 - y);
  });
  volumeAverages.forEach(s => { out += polyline(LOWER, s); });
  document.getElementById('volume').innerHTML = out;
}

function drawMacd() {
  let out = '<rect class="frame" x="13" y="1536" width="1054" height="244"/>' + hline('grid', 1658.5);
  const zero = yOf(LOWER, 1250);
  histogram.forEach((v, i) => {
    if (v === 1250) return;
    const y = yOf(LOWER, v);
    out += rect(y < zero ? 'hist-up' : 'hist-down', xOf(i) - 1, Math.min(y, zero), 3, Math.abs(y - zero));
  });
  macdLines.forEach(s => { out += polyline(LOWER, s); });
  document.getElementById('macd').innerHTML = out;
}

drawPrice();
drawVolume();
drawMacd();
```
